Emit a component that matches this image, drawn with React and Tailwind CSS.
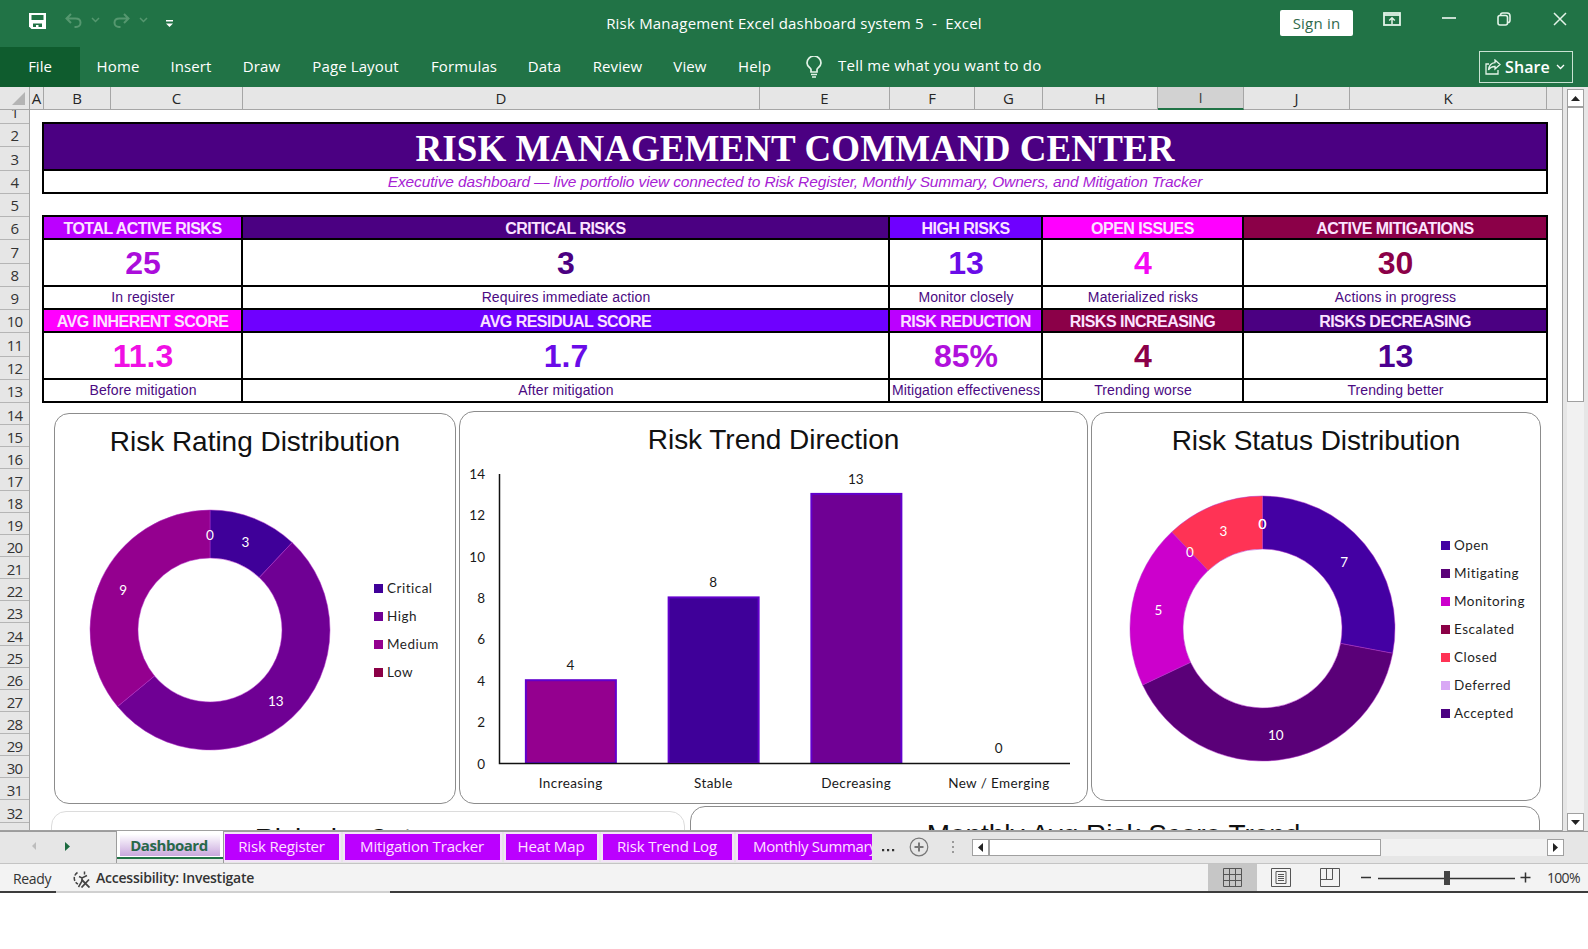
/**
 * Risk Management workbook
 * Spreadsheet window with ribbon, dashboard sheet, sheet tabs and status bar
 */

import React from 'react';

const ribbonTabs = [
  { label: 'Home', width: 76 },
  { label: 'Insert', width: 70 },
  { label: 'Draw', width: 71 },
  { label: 'Page Layout', width: 117 },
  { label: 'Formulas', width: 100 },
  { label: 'Data', width: 61 },
  { label: 'Review', width: 85 },
  { label: 'View', width: 60 },
  { label: 'Help', width: 69 },
];

const columns = [
  { label: 'A', width: 14 },
  { label: 'B', width: 67 },
  { label: 'C', width: 132 },
  { label: 'D', width: 517 },
  { label: 'E', width: 130 },
  { label: 'F', width: 85 },
  { label: 'G', width: 68 },
  { label: 'H', width: 115 },
  { label: 'I', width: 86, active: true },
  { label: 'J', width: 106 },
  { label: 'K', width: 197 },
];

// Row heights for rows 1 to 32
const rowHeights = [
  14, 23, 24, 23, 23, 23, 24, 23, 23, 23, 24, 23, 23, 22, 22, 22,
  22, 22, 22, 22, 22, 22, 22, 23, 22, 22, 22, 22, 22, 22, 22, 23,
];

const kpiRows = [
  [
    { title: 'TOTAL ACTIVE RISKS', value: '25', note: 'In register', bg: 'bg-[#bb00ff]', text: 'text-[#ab0ddb]' },
    { title: 'CRITICAL RISKS', value: '3', note: 'Requires immediate action', bg: 'bg-[#4b0082]', text: 'text-[#4b0082]' },
    { title: 'HIGH RISKS', value: '13', note: 'Monitor closely', bg: 'bg-[#6f00ff]', text: 'text-[#6a0be8]' },
    { title: 'OPEN ISSUES', value: '4', note: 'Materialized risks', bg: 'bg-[#ff00ff]', text: 'text-[#f408f4]' },
    { title: 'ACTIVE MITIGATIONS', value: '30', note: 'Actions in progress', bg: 'bg-[#8b0048]', text: 'text-[#8b0048]' },
  ],
  [
    { title: 'AVG INHERENT SCORE', value: '11.3', note: 'Before mitigation', bg: 'bg-[#ff00ff]', text: 'text-[#f010e4]' },
    { title: 'AVG RESIDUAL SCORE', value: '1.7', note: 'After mitigation', bg: 'bg-[#6f00ff]', text: 'text-[#6a0be8]' },
    { title: 'RISK REDUCTION', value: '85%', note: 'Mitigation effectiveness', bg: 'bg-[#bb00ff]', text: 'text-[#b010dc]' },
    { title: 'RISKS INCREASING', value: '4', note: 'Trending worse', bg: 'bg-[#8b0048]', text: 'text-[#8b0048]' },
    { title: 'RISKS DECREASING', value: '13', note: 'Trending better', bg: 'bg-[#4b0082]', text: 'text-[#4b0090]' },
  ],
];

const ratingData = [
  { label: 'Critical', value: 3, color: '#3f0099' },
  { label: 'High', value: 13, color: '#6f0094' },
  { label: 'Medium', value: 9, color: '#94008f' },
  { label: 'Low', value: 0, color: '#8b0046' },
];

const statusData = [
  { label: 'Open', value: 7, color: '#4400a3' },
  { label: 'Mitigating', value: 10, color: '#5a0078' },
  { label: 'Monitoring', value: 5, color: '#cc00cc' },
  { label: 'Escalated', value: 0, color: '#8b0046' },
  { label: 'Closed', value: 3, color: '#ff3355' },
  { label: 'Deferred', value: 0, color: '#d9a8f5' },
  { label: 'Accepted', value: 0, color: '#4b0082' },
];

const trendData = [
  { label: 'Increasing', value: 4, color: '#94008f' },
  { label: 'Stable', value: 8, color: '#3f0099' },
  { label: 'Decreasing', value: 13, color: '#6f0094' },
  { label: 'New / Emerging', value: 0, color: '#94008f' },
];

const sheetTabs = [
  { label: 'Risk Register', width: 114 },
  { label: 'Mitigation Tracker', width: 155 },
  { label: 'Heat Map', width: 91 },
  { label: 'Risk Trend Log', width: 129 },
];

const chartFont = 'Lato, Carlito, sans-serif';

/**
 * Title bar with quick access icons and window controls
 */
const TitleBar = () => (
  <div className="flex h-[47px] text-white">
    <div className="flex items-start w-[580px] pl-[29px] pt-[13px]">
      {/* Save */}
      <svg width="17" height="16" viewBox="0 0 17 16">
        <path d="M0 0h17v16H2.500L0 13.500z" fill="#fff" />
        <path d="M2.500 2h12v5h-12zM4 10.500h9V14H4z" fill="#217346" />
        <path d="M7 12h2.500v4H7z" fill="#fff" />
      </svg>
      {/* Undo and redo, both disabled */}
      <svg className="ml-[19px]" width="17" height="15" viewBox="0 0 17 15" fill="none" stroke="#55976f" strokeWidth="2">
        <path d="M6 1L1.5 5.5 6 10M2 5.5h8.5c3 0 5 1.7 5 4.2S13.500 14 11 14H9.500" />
      </svg>
      <svg className="ml-[9px] mt-[4px]" width="9" height="6" viewBox="0 0 9 6" fill="none" stroke="#55976f" strokeWidth="1.500">
        <path d="M1 1l3.500 3.500L8 1" />
      </svg>
      <svg className="ml-[13px]" width="17" height="15" viewBox="0 0 17 15" fill="none" stroke="#55976f" strokeWidth="2">
        <path d="M11 1l4.500 4.500L11 10M15 5.500H6.500c-3 0-5 1.700-5 4.200S3.500 14 6 14h1.500" />
      </svg>
      <svg className="ml-[9px] mt-[4px]" width="9" height="6" viewBox="0 0 9 6" fill="none" stroke="#55976f" strokeWidth="1.500">
        <path d="M1 1l3.500 3.500L8 1" />
      </svg>
      <svg className="ml-[18px] mt-[6px]" width="7" height="9" viewBox="0 0 7 9" fill="#fff">
        <path d="M0 1h7v1.500H0zM0 4.500h7L3.500 8z" />
      </svg>
    </div>
    <div className="w-[428px] pt-[12px] text-center text-[15px] leading-[22px] tracking-[0.2px] whitespace-pre">
      Risk Management Excel dashboard system 5  -  Excel
    </div>
    <div className="flex items-start flex-1 pl-[272px] pt-[10px]">
      <div className="flex items-center justify-center w-[73px] h-[26px] rounded-[2px] bg-white text-[15px] tracking-[0.2px] text-[#2f6a4c]">
        Sign in
      </div>
      <svg className="ml-[30px] mt-[2px]" width="18" height="14" viewBox="0 0 18 14" fill="none" stroke="#e3f3e8" strokeWidth="1.800">
        <rect x="1" y="1" width="16" height="12" />
        <path d="M1 3h16" />
        <path d="M9 12V6M6.200 8.500L9 5.800l2.800 2.700" strokeWidth="1.500" />
      </svg>
      <svg className="ml-[41px] mt-[7px]" width="14" height="2" viewBox="0 0 14 2">
        <path d="M0 1h14" stroke="#fff" strokeWidth="1.500" />
      </svg>
      <svg className="ml-[41px] mt-[2px]" width="14" height="14" viewBox="0 0 14 14" fill="none" stroke="#e3f3e8" strokeWidth="1.600">
        <rect x="1" y="3.500" width="9.500" height="9.500" rx="2" />
        <path d="M3.500 3.200C3.500 1.800 4.500 1 5.800 1H10c2 0 3 1.200 3 3v4.200c0 1.300-.9 2.300-2.200 2.300" />
      </svg>
      <svg className="ml-[42px] mt-[2px]" width="14" height="14" viewBox="0 0 14 14" stroke="#e3f3e8" strokeWidth="1.500">
        <path d="M1 1l12 12M13 1L1 13" />
      </svg>
    </div>
  </div>
);

/**
 * Ribbon tab strip with search hint and share button
 */
const Ribbon = () => (
  <div className="flex items-stretch h-[40px] text-[15px] text-white">
    <div className="flex items-center justify-center w-[80px] pb-[2px] bg-[#0f5c2e]">File</div>
    {ribbonTabs.map((tab) => (
      <div
        key={tab.label}
        className="flex items-center justify-center pb-[2px] tracking-[0.12px] whitespace-nowrap"
        style={{ width: tab.width }}
      >
        {tab.label}
      </div>
    ))}
    <div className="flex items-center flex-1 pl-[17px]">
      <svg width="16" height="22" viewBox="0 0 16 22" fill="none" stroke="#e3f3e8" strokeWidth="1.700">
        <path d="M5 16v-2.500C4.800 12 1 10.500 1 7a6.500 6.500 0 0 1 14 0c0 3.500-3.800 5-4 6.500V16z" />
        <path d="M5 18.500h6M6 21h4" />
      </svg>
      <span className="ml-[16px] -mt-[3px] tracking-[0.23px]">Tell me what you want to do</span>
    </div>
    <div className="flex items-center self-start w-[94px] h-[32px] mt-[4px] mr-[15px] pl-[5px] border border-[#c9e2d2]">
      <svg width="16" height="16" viewBox="0 0 16 16" fill="none" stroke="#e3f3e8" strokeWidth="1.300">
        <path d="M4 5H1v10h12v-4" />
        <path d="M10 1l5 4.500L10 10V7.500C7 7.500 5 8.500 3.500 11 4 6.500 6.500 4 10 3.700z" />
      </svg>
      <span className="ml-[4px] text-[16px] font-semibold tracking-[0.1px]">Share</span>
      <svg className="ml-[6px]" width="9" height="6" viewBox="0 0 9 6" fill="none" stroke="#fff" strokeWidth="1.300">
        <path d="M1 1l3.500 3.500L8 1" />
      </svg>
    </div>
  </div>
);

/**
 * Column letters above the sheet
 */
const ColumnHeader = () => (
  <div className="flex h-[23px] bg-[#e6e6e6] text-[15px] text-[#262626]">
    <div className="flex items-end justify-end w-[30px] pr-[4px] pb-[4px] border-r border-b border-[#a6a6a6]">
      <svg width="13" height="13" viewBox="0 0 13 13">
        <path d="M13 0v13H0z" fill="#b4b4b4" />
      </svg>
    </div>
    {columns.map((col) => (
      <div
        key={col.label}
        className={
          col.active
            ? 'flex items-center justify-center border-r border-b-2 border-r-[#a6a6a6] border-b-[#217346] bg-[#d2d2d2] text-[#444]'
            : 'flex items-center justify-center border-r border-b border-[#a6a6a6]'
        }
        style={{ width: col.width }}
      >
        {col.label}
      </div>
    ))}
    <div className="flex-1 border-b border-[#a6a6a6]" />
  </div>
);

/**
 * Row numbers left of the sheet
 */
const RowHeader = () => (
  <div className="w-[30px] h-full overflow-hidden bg-[#e6e6e6] border-r border-[#a6a6a6] text-[15px] tracking-[-0.8px] text-[#333]">
    {rowHeights.map((height, index) => (
      <div
        key={index}
        className="flex items-end justify-center overflow-hidden border-b border-[#b5b5b5]"
        style={{ height }}
      >
        <span className={index < 13 ? 'leading-[22px]' : 'leading-[18px]'}>{index + 1}</span>
      </div>
    ))}
  </div>
);

/**
 * One band of KPI cells: title, value and note rows
 */
const KpiBand = ({ items }) => (
  <>
    {items.map((item) => (
      <div key={item.title} className={`flex items-center justify-center h-[21px] pt-[2px] ${item.bg} text-[16px] font-bold tracking-[-0.52px] text-[#fbe3ff] whitespace-nowrap`}>
        {item.title}
      </div>
    ))}
    {items.map((item) => (
      <div key={item.title} className={`flex items-center justify-center h-[45px] pl-[1px] bg-white text-[32px] font-bold ${item.text}`}>
        {item.value}
      </div>
    ))}
    {items.map((item) => (
      <div key={item.title} className="flex items-center justify-center h-[21px] pl-[1px] bg-white text-[14px] tracking-[0.12px] text-[#4b0a82] whitespace-nowrap">
        {item.note}
      </div>
    ))}
  </>
);

const polar = (cx, cy, r, turn) => [
  cx + r * Math.sin(turn * 2 * Math.PI),
  cy - r * Math.cos(turn * 2 * Math.PI),
];

/**
 * Donut chart with value labels on each slice
 */
const Donut = ({ data, outer, inner }) => {
  const total = data.reduce((sum, item) => sum + item.value, 0);
  const c = outer + 1;
  const mid = (outer + inner) / 2;
  let acc = 0;

  const slices = data.map((item) => {
    const start = acc / total;
    acc += item.value;
    const end = acc / total;
    const large = end - start > 0.5 ? 1 : 0;
    const [x1, y1] = polar(c, c, outer, start);
    const [x2, y2] = polar(c, c, outer, end);
    const [x3, y3] = polar(c, c, inner, end);
    const [x4, y4] = polar(c, c, inner, start);
    const [lx, ly] = polar(c, c, mid, (start + end) / 2);
    return {
      ...item,
      lx,
      ly,
      d: `M${x1} ${y1}A${outer} ${outer} 0 ${large} 1 ${x2} ${y2}L${x3} ${y3}A${inner} ${inner} 0 ${large} 0 ${x4} ${y4}Z`,
    };
  });

  return (
    <svg width={c * 2} height={c * 2} className="shrink-0" fontFamily={chartFont} fontSize="13.500">
      {slices.filter((s) => s.value > 0).map((s) => (
        <path key={s.label} d={s.d} fill={s.color} stroke="#b030c8" strokeWidth="0.500" />
      ))}
      {slices.map((s) => (
        <text key={s.label} x={s.lx} y={s.ly + 6} textAnchor="middle" fill="#fff">
          {s.value}
        </text>
      ))}
    </svg>
  );
};

const Legend = ({ data }) => (
  <div className="flex flex-col font-[Lato] text-[13.5px] text-[#1f1f1f]">
    {data.map((item) => (
      <div key={item.label} className="flex items-center h-[28px] gap-[4px]">
        <span className="w-[9px] h-[9px]" style={{ backgroundColor: item.color }} />
        <span className="tracking-[0.5px]">{item.label}</span>
      </div>
    ))}
  </div>
);

/**
 * Column chart of risk counts by trend direction
 */
const TrendChart = () => {
  const baseY = 295;
  const unit = 20.7;
  const left = 39;
  const step = 142.75;

  return (
    <svg width="627" height="330" fontFamily={chartFont} fontSize="13.500" fill="#1a1a1a">
      {[0, 2, 4, 6, 8, 10, 12, 14].map((tick) => (
        <text key={tick} x="25" y={baseY + 5.5 - tick * unit} textAnchor="end">
          {tick}
        </text>
      ))}
      {trendData.map((item, index) => {
        const cx = left + step * (index + 0.5);
        const top = baseY - item.value * unit;
        return (
          <g key={item.label}>
            {item.value > 0 && (
              <rect x={cx - 44.5} y={top} width="90" height={baseY - top} fill={item.color} stroke="#6200cc" strokeWidth="2" />
            )}
            <text x={cx} y={top - 10} textAnchor="middle">{item.value}</text>
            <text x={cx + 0.3} y={baseY + 25} textAnchor="middle" letterSpacing="0.400">{item.label}</text>
          </g>
        );
      })}
      <path d={`M${left + 0.5} 6V${baseY + 0.5}H610`} fill="none" stroke="#111" strokeWidth="1.500" />
    </svg>
  );
};

const ChartTitle = ({ children }) => (
  <h2 className="text-center text-[28px] leading-[32px] tracking-[-0.03px] text-[#111] whitespace-nowrap">{children}</h2>
);

/**
 * Dashboard sheet content
 */
const Sheet = () => (
  <div className="flex-1 h-full overflow-hidden bg-white pl-[12px] pt-[12px] font-[Liberation_Sans]">
    {/* Banner */}
    <div className="flex flex-col gap-[2px] w-[1506px] p-[2px] bg-black">
      <div className="flex items-center justify-center h-[45px] pt-[5px] bg-[#4b0082] font-[Liberation_Serif] text-[37px] font-bold tracking-[0.07px] text-white whitespace-nowrap">
        RISK MANAGEMENT COMMAND CENTER
      </div>
      <div className="flex items-center justify-center h-[21px] bg-white text-[15.5px] italic tracking-[-0.14px] text-[#a722d4] whitespace-nowrap">
        Executive dashboard — live portfolio view connected to Risk Register, Monthly Summary, Owners, and Mitigation Tracker
      </div>
    </div>

    {/* KPI table */}
    <div className="grid grid-cols-[197px_645px_151px_199px_302px] gap-[2px] w-[1506px] mt-[21px] p-[2px] bg-black">
      <KpiBand items={kpiRows[0]} />
      <KpiBand items={kpiRows[1]} />
    </div>

    {/* Charts */}
    <div className="flex items-start gap-[3px] mt-[8px] pl-[12px]">
      <div className="w-[402px] h-[391px] mt-[2px] pt-[12px] border border-[#8c8c8c] rounded-[15px]">
        <ChartTitle>Risk Rating Distribution</ChartTitle>
        <div className="flex items-center mt-[51px] pl-[34px]">
          <Donut data={ratingData} outer={120} inner={72} />
          <div className="ml-[43px]">
            <Legend data={ratingData} />
          </div>
        </div>
      </div>
      <div className="w-[629px] h-[393px] pt-[12px] border border-[#8c8c8c] rounded-[15px]">
        <ChartTitle>Risk Trend Direction</ChartTitle>
        <div className="mt-[12px]">
          <TrendChart />
        </div>
      </div>
      <div className="w-[450px] h-[389px] mt-[1px] pt-[12px] border border-[#8c8c8c] rounded-[15px]">
        <ChartTitle>Risk Status Distribution</ChartTitle>
        <div className="flex items-center mt-[38px] pl-[37px]">
          <Donut data={statusData} outer={132.5} inner={79.5} />
          <div className="ml-[45px] mt-[2px]">
            <Legend data={statusData} />
          </div>
        </div>
      </div>
    </div>

    {/* Next chart row, mostly scrolled out of view */}
    <div className="flex items-start gap-[5px] mt-[2px] pl-[9px]">
      <div className="w-[634px] h-[300px] mt-[5px] pt-[11px] border border-[#dcdcdc] rounded-[15px]">
        <ChartTitle>Risks by Category</ChartTitle>
      </div>
      <div className="w-[850px] h-[300px] pt-[12px] pr-[3px] border border-[#8c8c8c] rounded-[15px]">
        <ChartTitle>Monthly Avg Risk Score Trend</ChartTitle>
      </div>
    </div>
  </div>
);

const VerticalScrollbar = () => (
  <div className="flex flex-col w-[25px] h-[744px] pl-[4px] pt-[2px] bg-[#e6e6e6]">
    <div className="flex items-center justify-center w-[17px] h-[18px] border border-[#a0a0a0] bg-white">
      <svg width="9" height="5" viewBox="0 0 9 5"><path d="M0 5h9L4.500 0z" fill="#222" /></svg>
    </div>
    <div className="w-[17px] h-[295px] border border-[#a0a0a0] bg-white" />
    <div className="w-[17px] flex-1 bg-[#f1f1f1]" />
    <div className="flex items-center justify-center w-[17px] h-[18px] border border-[#a0a0a0] bg-white">
      <svg width="9" height="5" viewBox="0 0 9 5"><path d="M0 0h9L4.500 5z" fill="#222" /></svg>
    </div>
  </div>
);

/**
 * Sheet tabs with navigation arrows and horizontal scrollbar
 */
const SheetTabs = () => (
  <div className="flex h-[33px] bg-[#e6e6e6] border-b border-[#c4c4c4] text-[15px]">
    <div className="flex items-center w-[117px] pb-[3px] pl-[32px] border-t border-r border-[#9c9c9c]">
      <svg width="4" height="8" viewBox="0 0 4 8"><path d="M4 0v8L0 4z" fill="#bdbdbd" /></svg>
      <svg className="ml-[29px]" width="5" height="9" viewBox="0 0 5 9"><path d="M0 0v9l5-4.500z" fill="#1c6b40" /></svg>
    </div>
    {/* Active tab */}
    <div className="w-[106px] h-[28px] px-[3px] pt-[3px] bg-white border-b-2 border-[#217346]">
      <div className="flex items-center justify-center h-[22px] pr-[2px] bg-linear-to-b from-white to-[#c9a8dd] font-bold tracking-[-0.45px] text-[#28684a]">
        Dashboard
      </div>
    </div>
    <div className="flex w-[649px] pt-[2px] pl-[1px] gap-[6px] border-t border-l border-[#9c9c9c] overflow-hidden text-[#ffe0ff]">
      {sheetTabs.map((tab) => (
        <div
          key={tab.label}
          className="flex items-center justify-center shrink-0 h-[26px] pb-[2px] pr-[1px] bg-[#bb00ff] outline-2 outline-[#f3e3f8] tracking-[-0.15px] whitespace-nowrap"
          style={{ width: tab.width }}
        >
          {tab.label}
        </div>
      ))}
      <div className="flex items-center shrink-0 w-[180px] h-[26px] pb-[2px] pl-[15px] bg-[#bb00ff] outline-2 outline-[#f3e3f8] tracking-[-0.35px] whitespace-nowrap">
        Monthly Summary
      </div>
    </div>
    <div className="flex items-center flex-1 pb-[1px] border-t border-[#9c9c9c]">
      <svg className="ml-[10px] mt-[7px]" width="13" height="3" viewBox="0 0 13 3" fill="#333">
        <path d="M0 0h2.200v2.200H0zM5 0h2.200v2.200H5zM10 0h2.200v2.200H10z" />
      </svg>
      <svg className="ml-[14px]" width="20" height="20" viewBox="0 0 20 20" fill="none" stroke="#777">
        <circle cx="10" cy="10" r="8.800" strokeWidth="1.200" />
        <path d="M10 5.500v9M5.500 10h9" strokeWidth="2" />
      </svg>
      <svg className="ml-[23px]" width="3" height="13" viewBox="0 0 3 13" fill="#9a9a9a">
        <path d="M0 0h2v2H0zM0 5h2v2H0zM0 10h2v2H0z" />
      </svg>
      <div className="flex w-[592px] h-[17px] ml-[17px] bg-[#f1f1f1]">
        <div className="flex items-center justify-center w-[17px] border border-[#a0a0a0] bg-white">
          <svg width="5" height="9" viewBox="0 0 5 9"><path d="M5 0v9L0 4.500z" fill="#222" /></svg>
        </div>
        <div className="w-[392px] border border-[#a0a0a0] bg-white" />
        <div className="flex-1" />
        <div className="flex items-center justify-center w-[17px] border border-[#a0a0a0] bg-white">
          <svg width="5" height="9" viewBox="0 0 5 9"><path d="M0 0v9l5-4.500z" fill="#222" /></svg>
        </div>
      </div>
    </div>
  </div>
);

/**
 * Status bar with view switches and zoom slider
 */
const StatusBar = () => (
  <div>
    <div className="flex items-center h-[27px] bg-[#f3f3f3] text-[14px] text-[#333]">
      <span className="w-[60px] pl-[13px] pt-[2px] tracking-[-0.35px]">Ready</span>
      <svg className="ml-[12px] mt-[3px]" width="18" height="18" viewBox="0 0 18 18" fill="none" stroke="#444" strokeWidth="1.500">
        <path d="M5.500 2.500A6.500 6.500 0 0 0 6 14" strokeDasharray="4 1.500" />
        <path d="M7 6.500l3 1.500 5-2.500M10 8v3l-3.500 6M12.500 1.500v3" />
        <path d="M9.500 9.500l8 8M17 9.500l-7.500 8" strokeWidth="1.800" />
      </svg>
      <span className="ml-[6px] w-[220px] font-semibold tracking-[-0.23px] whitespace-nowrap">Accessibility: Investigate</span>
      <div className="flex-1" />
      <div className="flex items-center justify-center w-[49px] h-full bg-[#c6c6c6]">
        <svg width="19" height="19" viewBox="0 0 19 19" fill="none" stroke="#555">
          <path d="M.500.500h18v18H.500zM.500 6.500h18M.500 12.500h18M6.500.500v18M12.500.500v18" />
        </svg>
      </div>
      <svg className="ml-[14px]" width="20" height="19" viewBox="0 0 20 19" fill="none" stroke="#555">
        <path d="M.500.500h19v18H.500zM5 3.500h10v12H5zM7 6.500h6M7 8.500h6M7 10.500h6M7 12.500h6" />
      </svg>
      <svg className="ml-[29px]" width="20" height="19" viewBox="0 0 20 19" fill="none" stroke="#555">
        <path d="M.500.500h19v18H.500zM.500 11.500h12V.500M6.500.500v11" />
      </svg>
      <svg className="ml-[21px]" width="170" height="20" viewBox="0 0 170 20" stroke="#333" strokeWidth="1.500">
        <path d="M0 9.500h10M17 10.500h137M159.500 9.500h10M164.500 4.500v10" />
        <path d="M83 3h6v14h-6z" fill="#444" stroke="none" />
      </svg>
      <span className="w-[57px] pl-[16px] tracking-[-0.7px]">100%</span>
    </div>
    <div className="flex h-[2px] bg-[#3c3c3c]">
      <div className="w-[334px] ml-[56px] bg-[#d0d0d0]" />
    </div>
  </div>
);

const App = () => {
  return (
    <div className="w-[1588px] h-[949px] overflow-hidden bg-white font-['Open_Sans',sans-serif]">
      <div className="bg-[#217346]">
        <TitleBar />
        <Ribbon />
      </div>
      <div className="flex h-[744px]">
        <div className="w-[1563px] border-r border-[#a6a6a6]">
          <ColumnHeader />
          <div className="flex h-[721px] border-b border-[#a0a0a0]">
            <RowHeader />
            <Sheet />
          </div>
        </div>
        <VerticalScrollbar />
      </div>
      <SheetTabs />
      <StatusBar />
    </div>
  );
};

export default App;
